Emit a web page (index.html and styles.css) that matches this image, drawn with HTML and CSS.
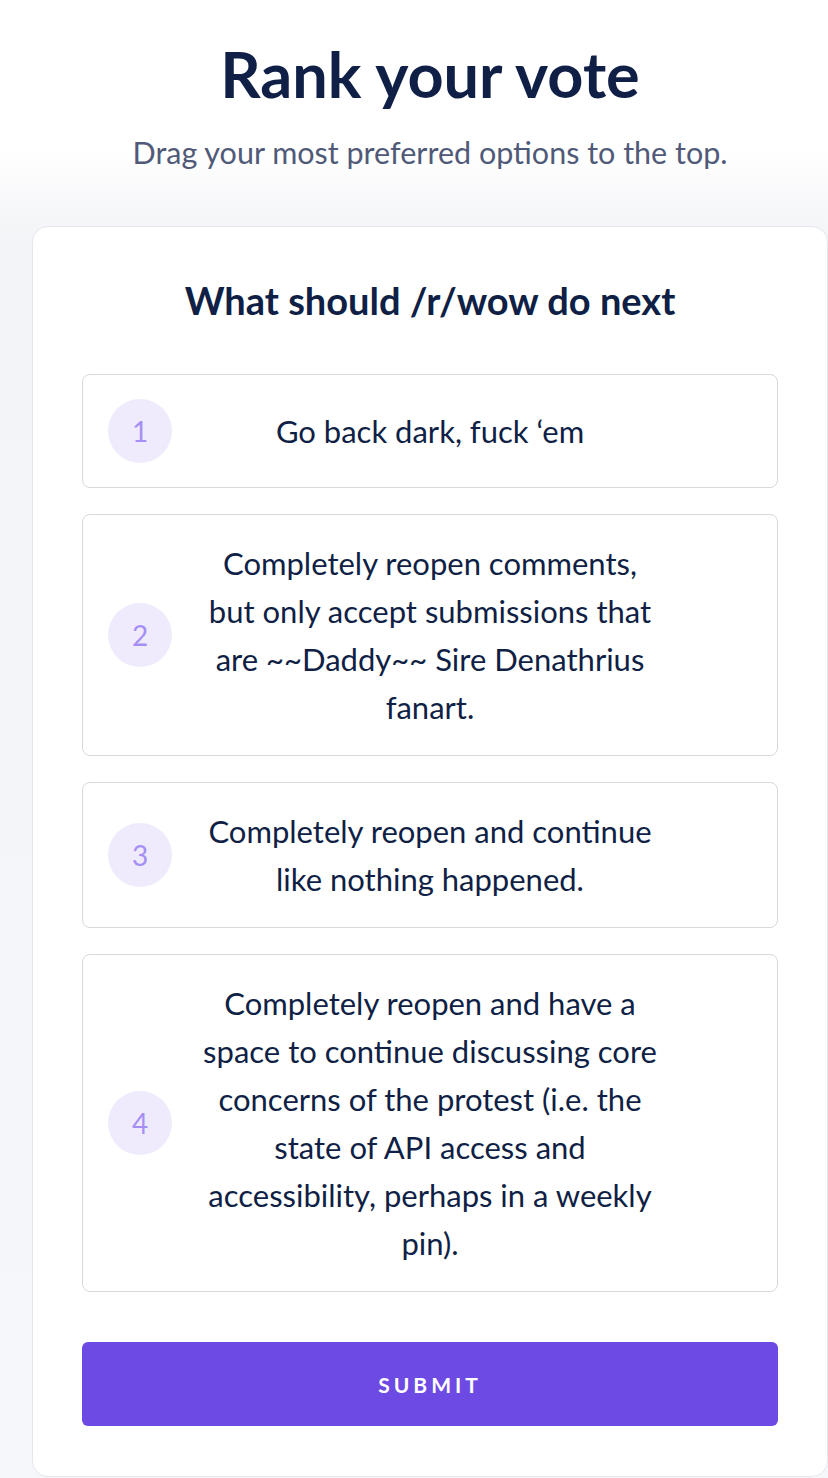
FILE: index.html
```html
<!DOCTYPE html>
<html lang="en">
<head>
<meta charset="utf-8">
<title>Rank your vote</title>
<link rel="stylesheet" href="styles.css">
</head>
<body>
<div class="page">
  <header class="intro">
    <h1 class="title">Rank your vote</h1>
    <p class="subtitle">Drag your most preferred options to the top.</p>
  </header>
  <main class="card">
    <h2 class="question">What should /r/wow do next</h2>
    <ol class="options">
      <li class="option"><span class="rank">1</span><span class="label">Go back dark, fuck ‘em</span><span class="spacer"></span></li>
      <li class="option"><span class="rank">2</span><span class="label">Completely reopen comments, but only accept submissions that are ~~Daddy~~ Sire Denathrius fanart.</span><span class="spacer"></span></li>
      <li class="option"><span class="rank">3</span><span class="label">Completely reopen and continue like nothing happened.</span><span class="spacer"></span></li>
      <li class="option"><span class="rank">4</span><span class="label">Completely reopen and have a space to continue discussing core concerns of the protest (i.e. the state of API access and accessibility, perhaps in a weekly pin).</span><span class="spacer"></span></li>
    </ol>
    <button class="submit" type="button">SUBMIT</button>
  </main>
</div>
</body>
</html>
```
FILE: styles.css
```css
html, body {
  margin: 0;
  padding: 0;
}
body {
  font-family: Lato, "Noto Sans", sans-serif;
  color: #0f1f45;
  background: linear-gradient(to bottom, #ffffff 0, #ffffff 150px, #f3f4f7 240px, #f6f7fa 100%);
  min-height: 1478px;
}
.page {
  margin-left: 32px;
  width: 796px;
}
.intro {
  text-align: center;
  padding-top: 38px;
}
.title {
  margin: 0;
  font-size: 63px;
  line-height: 72px;
  font-weight: 700;
  color: #0f1f45;
}
.subtitle {
  margin: 22px 0 0;
  font-size: 30.5px;
  line-height: 40px;
  color: #505a78;
}
.card {
  box-sizing: border-box;
  margin-top: 54px;
  background: #fff;
  border: 1px solid #e6e7ec;
  border-radius: 16px;
  padding: 0 49px 50px;
}
.question {
  margin: 0;
  padding: 52px 0;
  text-align: center;
  font-size: 38px;
  line-height: 43px;
  font-weight: 700;
  color: #0f1f45;
}
.options {
  list-style: none;
  margin: 0;
  padding: 0;
  display: flex;
  flex-direction: column;
  gap: 26px;
}
.option {
  display: grid;
  grid-template-columns: 64px 1fr 64px;
  align-items: center;
  border: 1px solid #d9d9dc;
  border-radius: 8px;
  padding: 24px 25px;
  background: #fff;
}
.rank {
  width: 64px;
  height: 64px;
  border-radius: 50%;
  background: #efebfd;
  color: #a58ff4;
  font-size: 28px;
  display: flex;
  align-items: center;
  justify-content: center;
}
.label {
  justify-self: center;
  max-width: 460px;
  text-align: center;
  font-size: 31px;
  line-height: 48px;
  color: #0f1f45;
}
.submit {
  display: block;
  width: 100%;
  margin-top: 50px;
  height: 84px;
  border: 0;
  border-radius: 6px;
  background: #6d4ae3;
  color: #fff;
  font-family: Lato, "Noto Sans", sans-serif;
  font-size: 21px;
  font-weight: 700;
  letter-spacing: 4px;
}
```
